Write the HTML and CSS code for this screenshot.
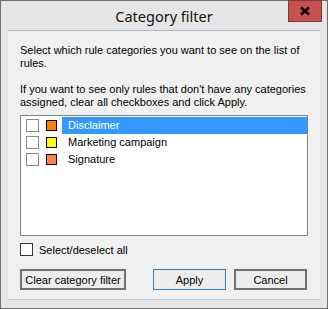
FILE: index.html
```
<!DOCTYPE html>
<html lang="en">
<head>
    <meta charset="UTF-8">
    <title>Category filter</title>
    <link rel="stylesheet" href="styles.css">
</head>
<body>

    <div class="window">
        <!-- Title bar -->
        <div class="titlebar">
            <span class="title">Category filter</span>
            <button class="close" aria-label="Close">
                <svg width="12" height="10" viewBox="0 0 12 10">
                    <path d="M2 1.5 L10 8.5 M10 1.5 L2 8.5" stroke="#000" stroke-width="2.6" fill="none"/>
                </svg>
            </button>
        </div>

        <!-- Dialog body -->
        <div class="client">
            <p class="text">Select which rule categories you want to see on the list of rules.</p>
            <p class="text">If you want to see only rules that don't have any categories assigned, clear all checkboxes and click Apply.</p>

            <ul class="list">
                <li class="item">
                    <span class="check"></span>
                    <span class="swatch orange"></span>
                    <span class="label selected">Disclaimer</span>
                </li>
                <li class="item">
                    <span class="check"></span>
                    <span class="swatch yellow"></span>
                    <span class="label">Marketing campaign</span>
                </li>
                <li class="item">
                    <span class="check"></span>
                    <span class="swatch coral"></span>
                    <span class="label">Signature</span>
                </li>
            </ul>

            <label class="select-all">
                <span class="check dark"></span>
                Select/deselect all
            </label>

            <div class="buttons">
                <button class="btn btn-clear">Clear category filter</button>
                <button class="btn btn-apply">Apply</button>
                <button class="btn btn-cancel">Cancel</button>
            </div>
        </div>
    </div>

</body>
</html>
```
FILE: styles.css
```
/* General styling */
body {
    margin: 0;
    font-family: "Liberation Sans", Arial, sans-serif;
    font-size: 11px;
    color: #000;
}

.window {
    width: 328px;
    height: 309px;
    box-sizing: border-box;
    border: 1px solid #6e6e6e;
    background-color: #e6e6e6;
    position: relative;
}

.titlebar {
    height: 29px;
    display: flex;
    align-items: center;
    justify-content: center;
}

.title {
    font-family: "Noto Sans", sans-serif;
    font-size: 14.5px;
    color: #111;
    margin-top: 1px;
}

.close {
    position: absolute;
    top: -1px;
    right: 5px;
    width: 34px;
    height: 22px;
    padding: 0;
    border: 1px solid #7f3a3a;
    background-color: #c75050;
    display: flex;
    align-items: center;
    justify-content: center;
}

.client {
    margin: 0 7px;
    height: 270px;
    box-sizing: border-box;
    background-color: #f0f0f0;
    border-top: 1px solid #a9b8cc;
    border-bottom: 1px solid #c5cfdc;
    padding: 13px 12px 0;
}

.text {
    margin: 0 0 13px;
    line-height: 13px;
}

.text + .text {
    margin-bottom: 6px;
}

.list {
    list-style: none;
    margin: 0;
    padding: 1px 0;
    height: 117px;
    border: 1px solid #828282;
    background-color: #fff;
}

.item {
    height: 17px;
    display: flex;
    align-items: center;
    padding-left: 5px;
}

.check {
    width: 11px;
    height: 11px;
    border: 1px solid #8a8a8a;
    background-color: #fff;
    flex-shrink: 0;
}

.check.dark {
    border-color: #333;
}

.swatch {
    width: 9px;
    height: 9px;
    border: 1px solid #000;
    margin-left: 7px;
}

.orange { background-color: #ff8000; }
.yellow { background-color: #ffff00; }
.coral { background-color: #fd7f4a; }

.label {
    margin-left: 5px;
    padding-left: 6px;
    height: 17px;
    line-height: 17px;
    flex: 1;
}

.label.selected {
    background-color: #3399ff;
    color: #fff;
}

.select-all {
    display: flex;
    align-items: center;
    gap: 6px;
    margin-top: 7px;
    height: 13px;
}

.buttons {
    display: flex;
    margin-top: 13px;
    gap: 8px;
}

.btn {
    height: 21px;
    padding: 0;
    font-family: inherit;
    font-size: 11px;
    color: #000;
    background-color: #ededed;
    border: 2px solid #707070;
    box-sizing: border-box;
}

.btn-clear {
    width: 106px;
    margin-right: 19px;
}

.btn-apply {
    width: 73px;
    border: 1px solid #3c7fb1;
    box-shadow: inset 0 0 0 1px #e6e6e6;
}

.btn-cancel {
    width: 73px;
}
```
